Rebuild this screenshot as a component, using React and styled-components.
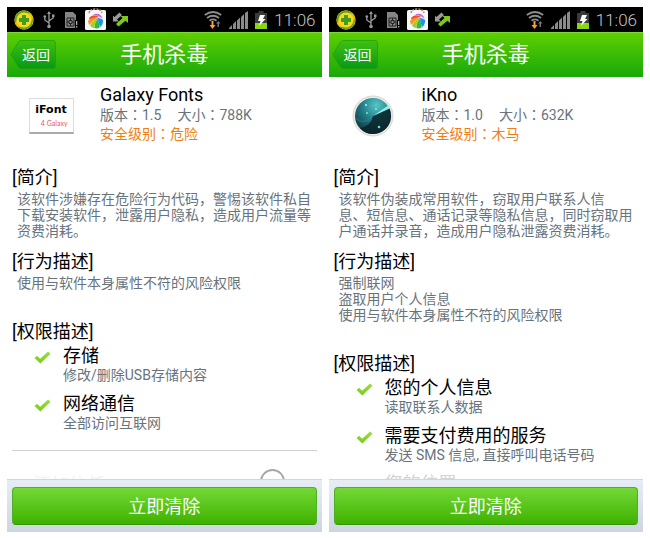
import React from "react";
import styled, { createGlobalStyle } from "styled-components";

const GlobalStyle = createGlobalStyle`
  * {
    box-sizing: border-box;
  }

  body {
    margin: 0;
    background: #fff;
    color: #000;
    font-family: Roboto, "Noto Sans CJK SC", sans-serif;
  }
`;

const Page = styled.div`
  display: grid;
  grid-template-columns: 1fr 1fr;
  gap: 7px;
  height: 100vh;
  padding: 7px 7px 6px;
`;

const Phone = styled.section`
  display: flex;
  flex-direction: column;
  min-width: 0;
  min-height: 0;
`;

const StatusBar = styled.div`
  display: flex;
  align-items: center;
  justify-content: space-between;
  flex: none;
  height: 25px;
  padding: 0 6px 0 7px;
  background: #000;
`;

const StatusGroup = styled.div`
  display: flex;
  align-items: center;
  gap: 7px;
`;

const Clock = styled.time`
  color: #c4c4c4;
  font-size: 17px;
  font-weight: 300;
  line-height: 24px;
`;

const Header = styled.header`
  display: grid;
  grid-template-columns: 1fr auto 1fr;
  align-items: center;
  flex: none;
  height: 45px;
  padding: 0 3px;
  background: linear-gradient(#5fd000, #18a80a);
  box-shadow: inset 0 1px #7bd93a;
`;

const BackButton = styled.button`
  position: relative;
  justify-self: start;
  width: 46px;
  height: 29px;
  padding: 0 0 0 6px;
  border: 0;
  background: none;
  color: #fff;
  font: 14px/30px Roboto, "Noto Sans CJK SC", sans-serif;

  svg {
    position: absolute;
    inset: 0;
  }

  span {
    position: relative;
  }
`;

const HeaderTitle = styled.h1`
  margin: 0;
  color: #fff;
  font-size: 22px;
  font-weight: 400;
  line-height: 32px;
`;

const Content = styled.main`
  flex: 1;
  min-height: 0;
  padding: 7px 5px 0;
  overflow: hidden;
`;

const AppInfo = styled.div`
  display: flex;
  gap: 24px;
  padding-left: 14px;
  margin-bottom: 18px;
`;

const AppIcon = styled.div`
  display: flex;
  align-items: center;
  justify-content: center;
  width: 50px;
  height: 63px;
`;

const AppName = styled.h2`
  margin: 0;
  font-size: 18px;
  font-weight: 400;
  line-height: 22px;
`;

const AppMeta = styled.p`
  display: flex;
  gap: 16px;
  margin: 0;
  color: ${(props) => (props.$warn ? "#f07d12" : "#68737c")};
  font-size: 14px;
  line-height: 19px;
`;

// the traditional face centres the full-width colon in its cell
const Colon = styled.span`
  font-family: "Noto Sans CJK TC", sans-serif;
  line-height: 16px;
`;

const SectionTitle = styled.h3`
  margin: 0;
  font-size: 18px;
  font-weight: 400;
  line-height: 26px;
`;

const SectionText = styled.p`
  margin: 0 0 ${(props) => props.$space} 5px;
  color: #68737c;
  font-size: 14px;
  line-height: 16px;
  white-space: nowrap;
`;

const PermissionList = styled.ul`
  display: flex;
  flex-direction: column;
  gap: 10px;
  margin: 0;
  padding: 0;
  list-style: none;
`;

const Permission = styled.li`
  display: flex;
  gap: 12px;
  padding-left: 22px;

  svg {
    flex: none;
    margin-top: 6px;
    visibility: ${(props) => (props.$faded ? "hidden" : "visible")};
  }
`;

const PermissionName = styled.div`
  color: ${(props) => (props.$faded ? "#d4d4d4" : "#000")};
  font-size: 18px;
  line-height: 22px;
`;

const PermissionDetail = styled.div`
  color: #68737c;
  font-size: 14px;
  line-height: 16px;
`;

const TrustRow = styled.label`
  display: flex;
  justify-content: space-between;
  margin-top: 19px;
  padding: 18px 32px 0 21px;
  border-top: 1px solid #d3d3d3;
  color: #f3f3f3;
  font-size: 18px;
  line-height: 32px;

  input {
    appearance: none;
    width: 25px;
    height: 25px;
    margin: 0;
    border: 2px solid #a8a8a8;
    border-radius: 50%;
  }
`;

const Footer = styled.footer`
  flex: none;
  padding: 7px 5px;
  border-top: 1px solid #cfd6df;
  background: linear-gradient(#e7edf5, #cdd5df);
`;

const CleanButton = styled.button`
  display: block;
  width: 100%;
  height: 38px;
  padding: 2px 0 0;
  border: 1px solid #4fae24;
  border-bottom-color: #359705;
  border-radius: 4px;
  background: linear-gradient(#74d836, #3eb200);
  color: #fff;
  font: 18px/32px Roboto, "Noto Sans CJK SC", sans-serif;
`;

const ShieldIcon = () => (
  <svg width="20" height="20" viewBox="0 0 20 20">
    <circle cx="10" cy="10" r="9.7" fill="#eebf0a" />
    <path d="M1 7A9.7 9.7 0 0 1 17 3.500C11 2 6 6 1 13Z" fill="#5aa522" />
    <path d="M18 15A9.700 9.700 0 0 1 3 16.500C9 18 14 15 19.500 8Z" fill="#6fa018" />
    <circle cx="10" cy="10" r="7.500" fill="#f8d820" />
    <path d="M8 5h4v3h3v4h-3v3H8v-3H5V8h3Z" fill="#439d20" />
  </svg>
);

const UsbIcon = () => (
  <svg width="16" height="18" viewBox="-2 0 16 18" fill="none" stroke="#9a9a9a" strokeWidth="1.300">
    <path d="M6 2v13M6 12L1.800 9V6M6 10l4.200-3V5" />
    <path d="M6 0l2 3H4Z" fill="#9a9a9a" stroke="none" />
    <circle cx="6" cy="15.500" r="1.800" fill="#9a9a9a" stroke="none" />
    <circle cx="1.800" cy="5.500" r="1.300" fill="#9a9a9a" stroke="none" />
    <path d="M9 3.500h2.500V6H9Z" fill="#9a9a9a" stroke="none" />
  </svg>
);

const SimIcon = () => (
  <svg width="14" height="16" viewBox="-1 0 14 16">
    <path d="M0 0h8l3 3v13H0Z" fill="#858585" />
    <path d="M2 6h7v8H2Z" fill="none" stroke="#222" />
    <path d="M4 8.500h3v3H4Z" fill="none" stroke="#222" />
    <path d="M2 10h2M7 10h2M5.500 6v2M5.500 12v2" stroke="#222" />
    <path d="M10 8h3v8h-3Z" fill="#000" />
    <path d="M11 9h1.300v4H11ZM11 14h1.300v1.500H11Z" fill="#aaa" />
  </svg>
);

const PinwheelIcon = () => (
  <svg width="21" height="23" viewBox="0 0 21 23">
    <rect y="2" width="21" height="20" rx="1.500" fill="#f7f7f7" />
    <path d="M4 5Q5 1 10.500 1T17 5" fill="none" stroke="#b58a70" strokeWidth="1.500" strokeDasharray="2 1" />
    <path d="M8 6.500Q15 4 17.800 10.500Q14 7.500 8 6.500Z" fill="#d35bdc" />
    <path d="M4 10Q8 5 15 9.500Q10 8.500 6 12Q4 12 4 10Z" fill="#f2503c" />
    <path d="M13 10Q6 9 3 13Q3 15 4.500 17Q8 12 13 10Z" fill="#ff9420" />
    <path d="M13 10Q8 12 5 17.500Q6.500 19.500 9 20Q10 14 13 10Z" fill="#a5cf1c" />
    <path d="M13 10Q10 14 9.300 20Q12 21 14.700 19.500Q13.500 14 13 10Z" fill="#35b847" />
    <path d="M13 10Q13 14 15 19.300Q18.500 16.500 18 12Q16 10 13 10Z" fill="#1e93ea" />
  </svg>
);

const TransferIcon = () => (
  <svg width="16" height="15" viewBox="1 0 16 15">
    <path d="M7.500 .5L10 3 5 7.500 7 9.500H0V3L2.500 5Z" fill="#999" />
    <path d="M6.500 14.500L4 12 10.500 6 8.500 4H16V11L13.500 8.800Z" fill="#7ec81e" />
  </svg>
);

const WifiIcon = () => (
  <svg width="18" height="18" viewBox="0 0 18 18">
    <g fill="none" stroke="#8d8d8d" strokeWidth="1.800">
      <path d="M.8 4q8.200-6 16.400 0M3 7q6-4.500 12 0M5.500 9.700q3.500-2.500 7 0" />
    </g>
    <path d="M7.500 10h2v4h2L8.500 18l-3-4h2Z" fill="#ff9d2e" />
    <path d="M13.500 16v-3.500H12l2.300-2.500 2.200 2.500H15V16Z" fill="#777" />
  </svg>
);

const SignalIcon = () => (
  <svg width="19" height="18" viewBox="0 0 19 18" fill="#8b8b8b">
    <path d="M0 18v-1l3-3v4ZM4 18v-5l3-3v8ZM8 18V9.500l3-3V18ZM12 18V6l3-3v15ZM16 18V2l3-2v18Z" />
  </svg>
);

const BatteryIcon = () => (
  <svg width="12" height="18" viewBox="0 0 12 18">
    <path d="M3.500 0h5v2H12v16H0V2h3.500Z" fill="#3a3a3a" />
    <path d="M0 12h12v6H0Z" fill="#8bd613" />
    <path d="M5 4h5L8 8h2.500L4 15l1.500-5H3Z" fill="#fff" />
  </svg>
);

const CheckIcon = () => (
  <svg width="17" height="13" viewBox="0 0 17 13">
    <defs>
      <linearGradient id="tick" x1="0" y1="0" x2="0" y2="1">
        <stop offset="0" stopColor="#9be332" />
        <stop offset="1" stopColor="#6fd014" />
      </linearGradient>
    </defs>
    <path d="M.5 7L3 4.800l3.200 3L14 .5 16.500 2.800 6.300 12.500Z" fill="url(#tick)" />
  </svg>
);

const FontAppTile = styled.div`
  display: flex;
  flex-direction: column;
  align-items: center;
  width: 45px;
  height: 36px;
  padding-top: 4px;
  border: 1px solid #ddd;
  border-bottom: 2px solid #aaa;
  background: #fff;
  font-family: "DejaVu Sans", sans-serif;
  font-size: 11px;
  font-weight: 700;
  line-height: 14px;

  small {
    align-self: flex-end;
    padding-right: 5px;
    color: #f0505a;
    font-family: Lato, sans-serif;
    font-size: 7px;
    font-weight: 400;
    line-height: 12px;
  }
`;

const FontApp = () => (
  <FontAppTile>
    iFont
    <small>4 Galaxy</small>
  </FontAppTile>
);

const RadarIcon = () => (
  <svg width="44" height="44" viewBox="0 0 44 44">
    <defs>
      <radialGradient id="radar" cx="0.600" cy="0.200" r="0.800">
        <stop offset="0" stopColor="#55c7c8" />
        <stop offset="0.500" stopColor="#237f8b" />
        <stop offset="1" stopColor="#103942" />
      </radialGradient>
    </defs>
    <circle cx="22" cy="22" r="20" fill="#ece9e6" stroke="#dad6d3" />
    <circle cx="22" cy="22" r="18" fill="url(#radar)" />
    <path d="M22 22L38.500 14.500A18 18 0 0 1 22 40Q14 40 9 34Q20 32 22 22Z" fill="#0b2228" opacity="0.850" />
    <path d="M22 22L37 11.500 38.500 14.500Z" fill="#91eee5" />
    <path d="M4 24q9 8 18-2" fill="none" stroke="#2f8d97" opacity="0.600" />
    <circle cx="15" cy="11" r="1" fill="#a6f4ee" />
    <circle cx="25" cy="15" r="1" fill="#8be5e0" />
    <circle cx="16" cy="19" r="1" fill="#7edfdb" />
    <circle cx="28" cy="33" r="1.300" fill="#61dde4" />
  </svg>
);

const BackShape = () => (
  <svg width="46" height="29" viewBox="0 0 46 29">
    <defs>
      <linearGradient id="back" x1="0" y1="0" x2="0" y2="1">
        <stop offset="0" stopColor="#3fc012" />
        <stop offset="1" stopColor="#089a14" />
      </linearGradient>
    </defs>
    <path
      d="M.8 14.500L8.500 2Q9.500.5 11.500.5H43Q45.500.5 45.500 3V26Q45.500 28.500 43 28.500H11.500Q9.500 28.500 8.500 27Z"
      fill="url(#back)"
      stroke="#1f9e0c"
      strokeOpacity="0.700"
    />
  </svg>
);

const apps = [
  {
    name: "Galaxy Fonts",
    icon: <FontApp />,
    version: "1.5",
    size: "788K",
    level: "危险",
    intro: [
      "该软件涉嫌存在危险行为代码\uff0c警惕该软件私自",
      "下载安装软件\uff0c泄露用户隐私\uff0c造成用户流量等",
      "资费消耗。",
    ],
    behaviors: ["使用与软件本身属性不符的风险权限"],
    permissions: [
      { name: "存储", detail: "修改/删除USB存储内容" },
      { name: "网络通信", detail: "全部访问互联网" },
    ],
    trust: "添加信任",
  },
  {
    name: "iKno",
    icon: <RadarIcon />,
    version: "1.0",
    size: "632K",
    level: "木马",
    intro: [
      "该软件伪装成常用软件\uff0c窃取用户联系人信",
      "息、短信息、通话记录等隐私信息\uff0c同时窃取用",
      "户通话并录音\uff0c造成用户隐私泄露资费消耗。",
    ],
    behaviors: ["强制联网", "盗取用户个人信息", "使用与软件本身属性不符的风险权限"],
    permissions: [
      { name: "您的个人信息", detail: "读取联系人数据" },
      { name: "需要支付费用的服务", detail: "发送 SMS 信息, 直接呼叫电话号码" },
      { name: "您的位置", faded: true },
    ],
  },
];

const Lines = ({ items }) =>
  items.map((line) => (
    <React.Fragment key={line}>
      {line}
      <br />
    </React.Fragment>
  ));

const Field = ({ label, value }) => (
  <span>
    {label}
    <Colon>{"\uff1a"}</Colon>
    {value}
  </span>
);

const AppScreen = ({ app }) => {
  return (
    <Phone>
      <StatusBar>
        <StatusGroup>
          <ShieldIcon />
          <UsbIcon />
          <SimIcon />
          <PinwheelIcon />
          <TransferIcon />
        </StatusGroup>
        <StatusGroup>
          <WifiIcon />
          <SignalIcon />
          <BatteryIcon />
          <Clock>11:06</Clock>
        </StatusGroup>
      </StatusBar>
      <Header>
        <BackButton type="button">
          <BackShape />
          <span>返回</span>
        </BackButton>
        <HeaderTitle>手机杀毒</HeaderTitle>
      </Header>
      <Content>
        <AppInfo>
          <AppIcon>{app.icon}</AppIcon>
          <div>
            <AppName>{app.name}</AppName>
            <AppMeta>
              <Field label="版本" value={app.version} />
              <Field label="大小" value={app.size} />
            </AppMeta>
            <AppMeta $warn>
              <Field label="安全级别" value={app.level} />
            </AppMeta>
          </div>
        </AppInfo>
        <SectionTitle>[简介]</SectionTitle>
        <SectionText $space="10px">
          <Lines items={app.intro} />
        </SectionText>
        <SectionTitle>[行为描述]</SectionTitle>
        <SectionText $space="28px">
          <Lines items={app.behaviors} />
        </SectionText>
        <SectionTitle>[权限描述]</SectionTitle>
        <PermissionList>
          {app.permissions.map((item) => (
            <Permission key={item.name} $faded={item.faded}>
              <CheckIcon />
              <div>
                <PermissionName $faded={item.faded}>{item.name}</PermissionName>
                <PermissionDetail>{item.detail}</PermissionDetail>
              </div>
            </Permission>
          ))}
        </PermissionList>
        {app.trust && (
          <TrustRow>
            {app.trust}
            <input type="radio" />
          </TrustRow>
        )}
      </Content>
      <Footer>
        <CleanButton type="button">立即清除</CleanButton>
      </Footer>
    </Phone>
  );
};

const App = () => {
  return (
    <>
      <GlobalStyle />
      <Page>
        {apps.map((app) => (
          <AppScreen key={app.name} app={app} />
        ))}
      </Page>
    </>
  );
};

export default App;
